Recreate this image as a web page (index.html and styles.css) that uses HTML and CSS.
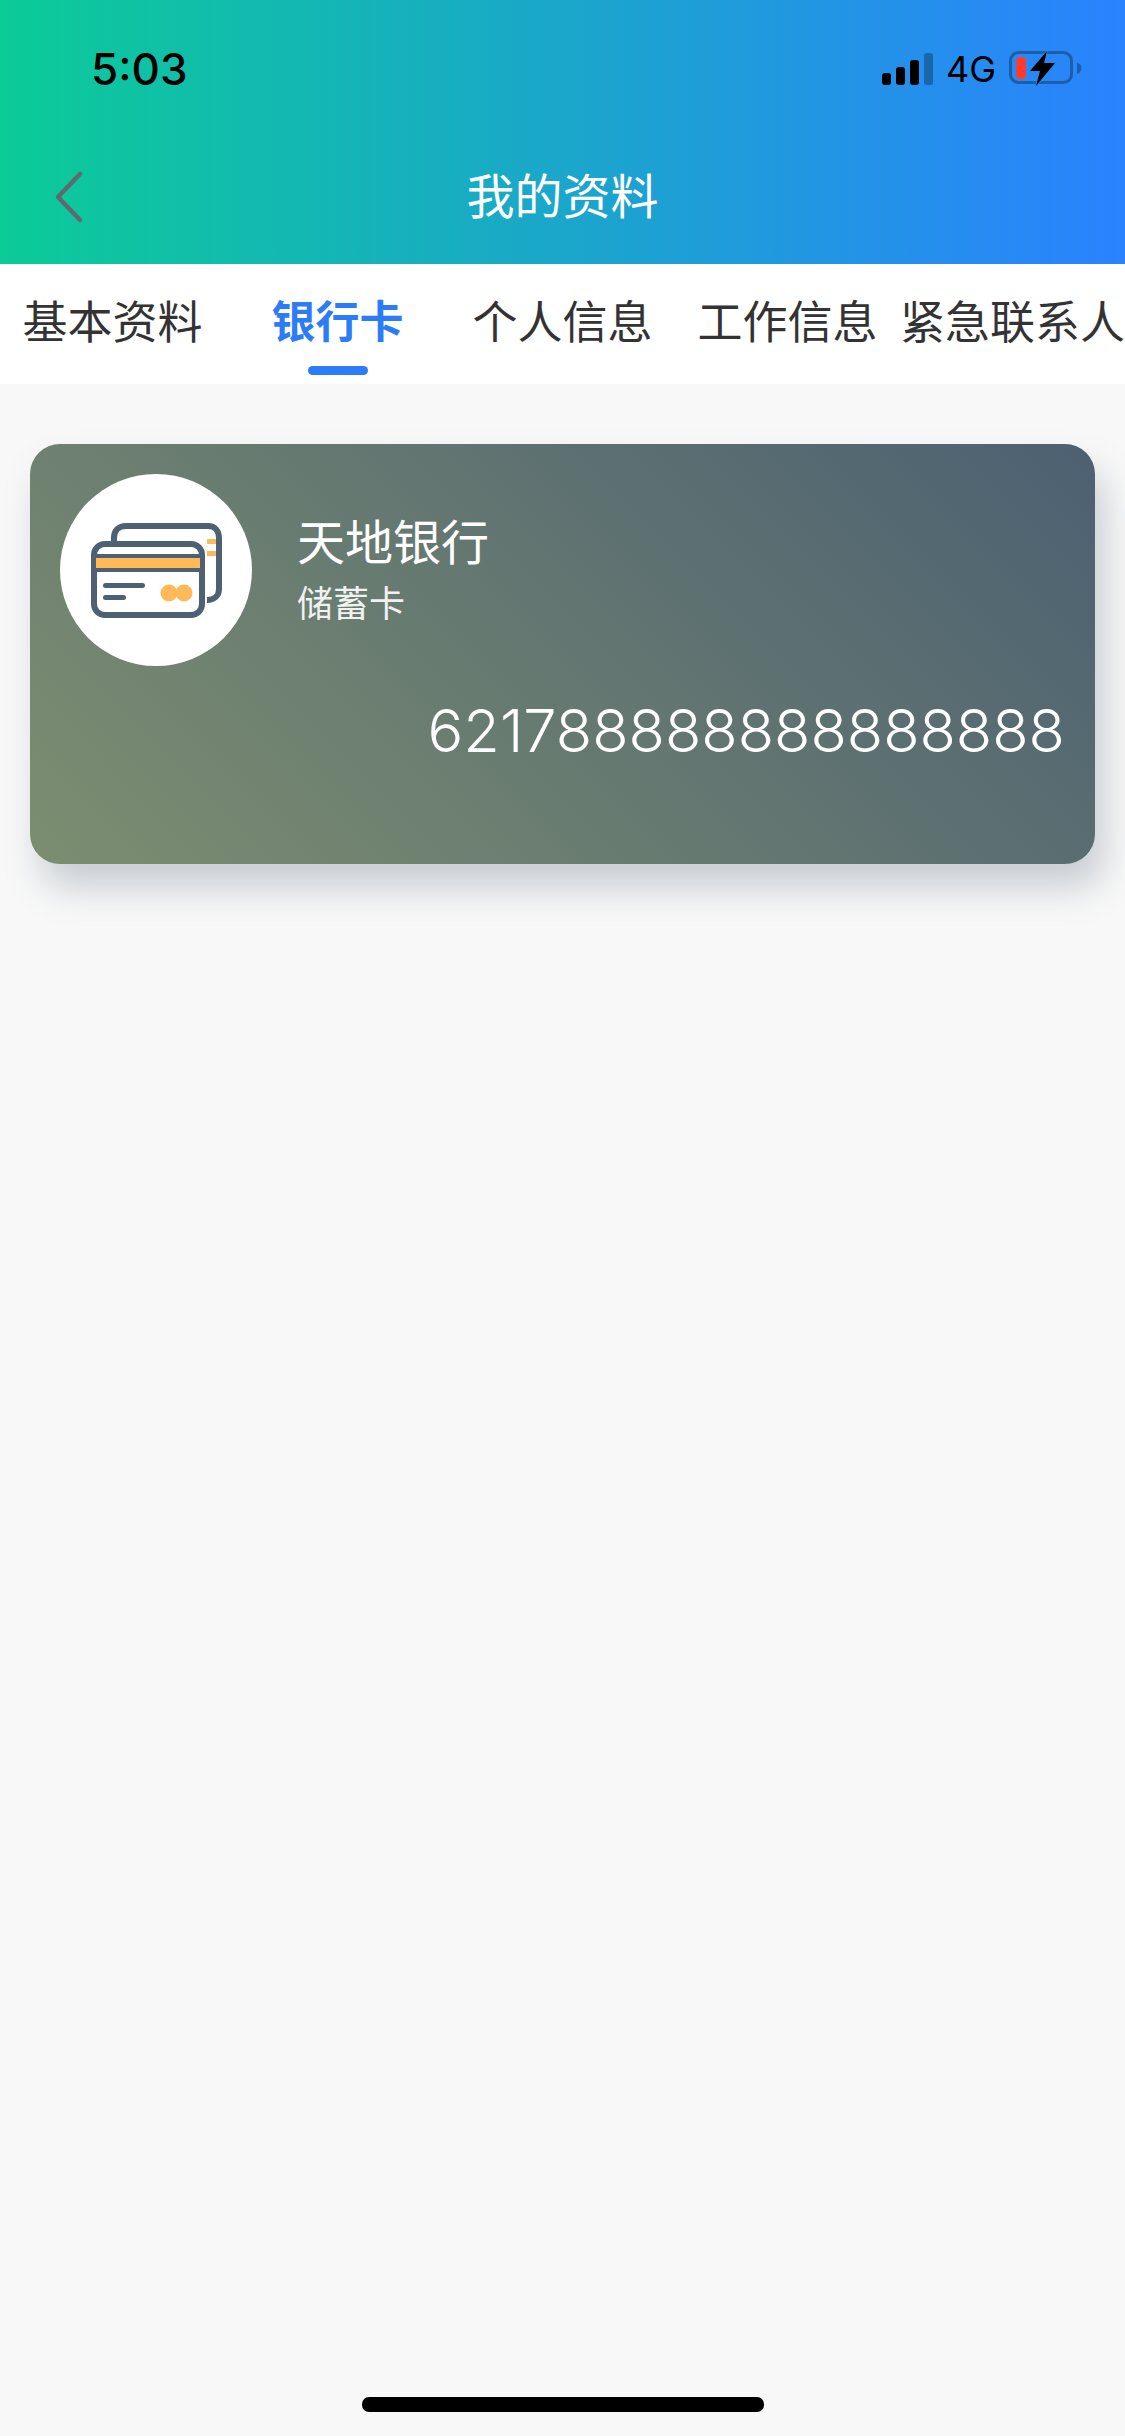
FILE: index.html
```html
<!DOCTYPE html>
<html lang="zh-CN">
<head>
    <meta charset="UTF-8">
    <meta name="viewport" content="width=device-width, initial-scale=1.0">
    <title>我的资料</title>
    <link rel="stylesheet" href="styles.css">
</head>
<body>
    <div class="header">
        <div class="status-bar">
            <div class="time">5:03</div>
            <div class="status-icons">
                <svg class="signal" width="51" height="32" viewBox="0 0 51 32">
                    <rect x="0" y="20" width="9" height="12" rx="3" fill="#000"/>
                    <rect x="14" y="14" width="9" height="18" rx="3" fill="#000"/>
                    <rect x="28" y="7" width="9" height="25" rx="3" fill="#000"/>
                    <rect x="42" y="0" width="9" height="32" rx="2.500" fill="#000" opacity="0.28"/>
                </svg>
                <span class="network">4G</span>
                <svg class="battery" width="73" height="36" viewBox="0 0 73 36">
                    <rect x="1.500" y="1.500" width="61" height="30" rx="8" fill="none" stroke="#1c5fa8" stroke-width="3"/>
                    <path d="M68 11.500c3 1 4.500 3 4.500 5.500s-1.500 5-4.500 6z" fill="#1c5fa8"/>
                    <rect x="7" y="6" width="10" height="22" rx="4" fill="#ff3b30"/>
                    <path d="M38 0 L21 20 L31 20 L27 35 L46 12 L35 12 Z" fill="#000" stroke="#2a82f0" stroke-width="1.500" paint-order="stroke"/>
                </svg>
            </div>
        </div>
        <div class="nav-bar">
            <svg class="back" width="30" height="54" viewBox="0 0 30 54">
                <path d="M26 4 L4 27 L26 50" fill="none" stroke="#5f6a70" stroke-width="4.500" stroke-linecap="round" stroke-linejoin="round"/>
            </svg>
            <div class="nav-title">我的资料</div>
        </div>
    </div>

    <div class="tabs">
        <div class="tab">基本资料</div>
        <div class="tab active">银行卡</div>
        <div class="tab">个人信息</div>
        <div class="tab">工作信息</div>
        <div class="tab">紧急联系人</div>
    </div>

    <div class="content">
        <div class="bank-card">
            <div class="card-top">
                <div class="card-logo">
                    <svg width="132" height="96" viewBox="0 0 132 96">
                        <path d="M24 20 V16 C24 8 29 4 36 4 H118 C125 4 129 9 129 16 V67 C129 74 124 78 117 78" fill="none" stroke="#4e6174" stroke-width="6"/>
                        <rect x="117" y="17" width="9" height="5" fill="#ffb957"/>
                        <rect x="117" y="29" width="9" height="5" fill="#ffb957"/>
                        <rect x="4" y="22" width="108" height="71" rx="11" fill="#fff" stroke="#4e6174" stroke-width="6"/>
                        <rect x="4" y="32" width="108" height="18" fill="#4e6174"/>
                        <rect x="6" y="36" width="104" height="10" fill="#ffb957"/>
                        <rect x="13" y="61" width="42" height="5" rx="2.500" fill="#4e6174"/>
                        <rect x="13" y="73" width="23" height="5" rx="2.500" fill="#4e6174"/>
                        <circle cx="79" cy="71" r="8.500" fill="#ffb957"/>
                        <circle cx="94" cy="71" r="8.500" fill="#ffb957"/>
                    </svg>
                </div>
                <div class="card-info">
                    <div class="bank-name">天地银行</div>
                    <div class="card-type">储蓄卡</div>
                </div>
            </div>
            <div class="card-number">621788888888888888</div>
        </div>
    </div>

    <div class="home-bar"></div>
</body>
</html>
```

FILE: styles.css
```css
body {
    font-family: "Noto Sans CJK SC", "Liberation Sans", sans-serif;
    margin: 0;
    padding: 0;
    height: 2436px;
    display: flex;
    flex-direction: column;
    background-color: #f8f8f8;
    overflow: hidden;
}
.header {
    height: 264px;
    background: linear-gradient(90deg, #0bcb97, #2a82ff);
}
.status-bar {
    height: 132px;
    box-sizing: border-box;
    padding: 5px 43px 0 91px;
    display: flex;
    justify-content: space-between;
    align-items: center;
}
.time {
    font-family: Inter, "Liberation Sans", sans-serif;
    font-size: 44px;
    font-weight: 500;
    color: #000;
}
.status-icons {
    display: flex;
    align-items: center;
    gap: 13px;
}
.network {
    font-family: Inter, "Liberation Sans", sans-serif;
    font-size: 36px;
    color: #000;
}
.nav-bar {
    height: 132px;
    box-sizing: border-box;
    padding-bottom: 10px;
    display: flex;
    align-items: center;
    justify-content: center;
    position: relative;
}
.back {
    position: absolute;
    left: 54px;
    top: 38px;
}
.nav-title {
    font-size: 48px;
    color: #fff;
}
.tabs {
    height: 120px;
    display: grid;
    grid-template-columns: repeat(5, 1fr);
    background-color: #fff;
}
.tab {
    position: relative;
    display: flex;
    justify-content: center;
    align-items: center;
    padding-bottom: 10px;
    font-size: 45px;
    color: #333;
    white-space: nowrap;
}
.tab.active {
    color: #2b7cf6;
    font-weight: 700;
    font-size: 44px;
}
.tab.active::after {
    content: "";
    position: absolute;
    left: 83px;
    bottom: 9px;
    width: 60px;
    height: 9px;
    border-radius: 5px;
    background-color: #2b7cf6;
}
.content {
    flex: 1;
    padding: 60px 30px 0;
}
.bank-card {
    height: 420px;
    box-sizing: border-box;
    padding: 30px;
    border-radius: 30px;
    background: linear-gradient(45deg, #7c8e70, #4c6072);
    box-shadow: 10px 24px 36px rgba(78, 97, 116, 0.28);
    color: #fff;
}
.card-top {
    display: flex;
    align-items: center;
    gap: 45px;
}
.card-logo {
    width: 192px;
    height: 192px;
    border-radius: 50%;
    background-color: #fff;
    display: flex;
    align-items: center;
    justify-content: center;
}
.card-info {
    padding-bottom: 5px;
}
.bank-name {
    font-size: 48px;
    line-height: 66px;
}
.card-type {
    font-size: 36px;
    line-height: 58px;
    opacity: 0.9;
}
.card-number {
    font-family: Inter, "Liberation Sans", sans-serif;
    font-size: 59.5px;
    font-weight: 300;
    text-align: right;
    margin-top: 28px;
}
.home-bar {
    position: absolute;
    left: 362px;
    top: 2397px;
    width: 402px;
    height: 15px;
    border-radius: 7px;
    background-color: #000;
}
```
